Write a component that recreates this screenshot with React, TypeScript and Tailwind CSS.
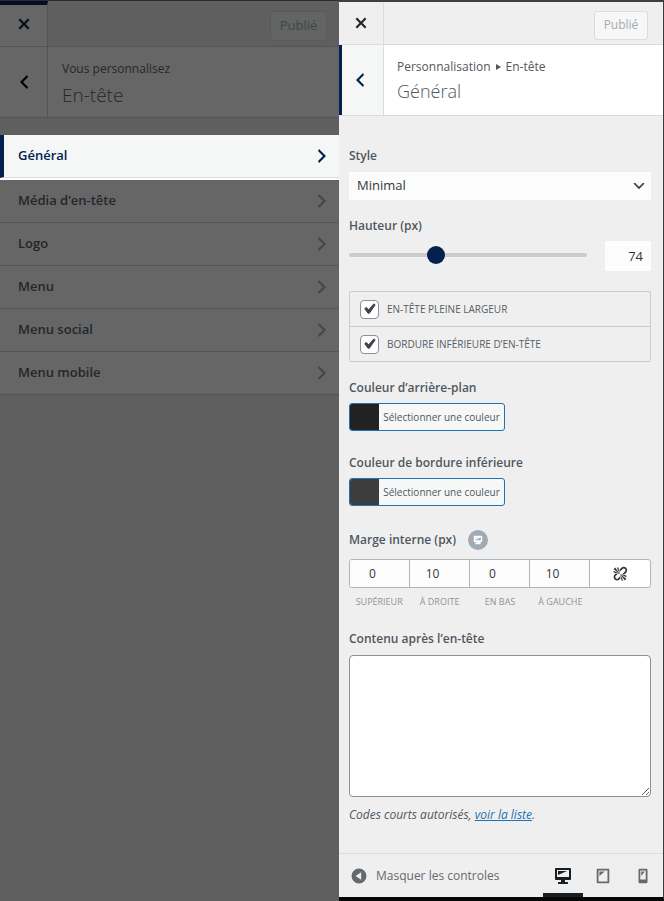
import { ReactNode, useState } from "react";

const ICONS = {
  close:
    "M14.95 6.46L11.41 10l3.54 3.54-1.41 1.41L10 11.42l-3.53 3.53-1.42-1.42L8.58 10 5.05 6.47l1.42-1.42L10 8.58l3.54-3.53z",
  left: "M14 5l-5 5 5 5-1 2-7-7 7-7z",
  right: "M6 15l5-5-5-5 1-2 7 7-7 7z",
  down: "M5 6l5 5 5-5 2 1-7 7-7-7z",
  check:
    "M14.83 4.89l1.34.94-5.81 8.38H9.02L5.78 9.67l1.34-1.25 2.57 2.4z",
  desktop:
    "M3 2h14c.55 0 1 .45 1 1v10c0 .55-.45 1-1 1h-5v2h2c.55 0 1 .45 1 1v1H5v-1c0-.55.45-1 1-1h2v-2H3c-.55 0-1-.45-1-1V3c0-.55.45-1 1-1zm13 9V4H4v7h12zM5 5h9L5 9V5z",
  tablet:
    "M4 2h12c.55 0 1 .45 1 1v14c0 .55-.45 1-1 1H4c-.55 0-1-.45-1-1V3c0-.55.45-1 1-1zm11 14V4H5v12h10zM6 5l6 0-6 5V5z",
  phone:
    "M6 2h8c.55 0 1 .45 1 1v14c0 .55-.45 1-1 1H6c-.55 0-1-.45-1-1V3c0-.55.45-1 1-1zm7 12V4H7v10h6zM8 5h4l-4 5V5z",
  collapse:
    "M10 1.7a8.3 8.3 0 1 0 0 16.6 8.3 8.3 0 0 0 0-16.6zM12.4 5.8v8.4L6.2 10z",
  unlink:
    "M17.74 2.26c1.68 1.69 1.68 4.41 0 6.1l-1.53 1.52c-.32.33-.69.58-1.08.77L13 10l1.69-1.64.76-.77.76-.76c.84-.84.84-2.2 0-3.04-.84-.85-2.2-.85-3.04 0l-.77.76-.76.76L10 7l-.65-2.14c.19-.38.44-.75.77-1.07l1.52-1.53c1.69-1.68 4.42-1.68 6.1 0zM2 4l8 6-6-8zm4-2l4 8-2-8H6zM2 6l8 4-8-2V6zm7.36 7.69L10 13l.74 2.35-1.38 1.39c-1.69 1.68-4.41 1.68-6.1 0-1.68-1.68-1.68-4.41 0-6.09l1.39-1.38L7 10l-.69.64-1.52 1.53c-.85.84-.85 2.2 0 3.04.84.85 2.2.85 3.04 0zM18 16l-8-6 6 8zm-4 2l-4-8 2 8h2zm4-4l-8-4 8 2v2z",
};

function Icon({
  name,
  className,
  rule = "evenodd",
}: {
  name: keyof typeof ICONS;
  className: string;
  rule?: "evenodd" | "nonzero";
}) {
  return (
    <svg viewBox="0 0 20 20" className={className} fill="currentColor" fillRule={rule} aria-hidden="true">
      <path d={ICONS[name]} />
    </svg>
  );
}

function SectionsPanel() {
  const items = ["Média d’en-tête", "Logo", "Menu", "Menu social", "Menu mobile"];
  return (
    <aside className="border-t border-[#2b2b2b] bg-[#5f5f5f]">
      <div className="flex h-[46px] border-b border-[#545454]">
        <button
          type="button"
          aria-label="Fermer"
          className="flex w-12 items-center justify-center border-t-4 border-r border-t-[#000e28] border-r-[#545454] bg-[#666666] pb-1 text-[#060d18]"
        >
          <Icon name="close" className="size-[22px]" />
        </button>
        <div className="flex flex-1 items-center justify-end pt-1 pr-3">
          <button
            type="button"
            disabled
            className="h-[30px] w-[57px] rounded-[3px] border border-[#595b5b] bg-[#636464] text-[13px] text-[#424445]"
          >
            Publié
          </button>
        </div>
      </div>
      <div className="flex h-[71px] border-b border-[#545454] bg-[#666666]">
        <button
          type="button"
          aria-label="Retour"
          className="flex w-12 items-center justify-center border-r border-[#545454] text-black"
        >
          <Icon name="left" className="size-5" />
        </button>
        <div className="pt-3 pl-3.5 text-[#25282b]">
          <p className="text-[12px] leading-5">Vous personnalisez</p>
          <h1 className="text-[19px] leading-8 font-light">En-tête</h1>
        </div>
      </div>
      <ul className="pt-[17px]">
        <li className="border-b-2 border-white">
          <button
            type="button"
            className="flex h-[43px] w-full items-center justify-between border-b border-l-4 border-b-[#dcdcde] border-l-[#04204f] bg-[#f5f7f7] pr-[7px] pl-3.5 text-[13px] font-semibold text-[#04204f]"
          >
            Général
            <Icon name="right" className="size-5" />
          </button>
        </li>
        {items.map((item) => (
          <li key={item}>
            <button
              type="button"
              className="flex h-[43px] w-full items-center justify-between border-b border-[#555555] bg-[#666666] pr-[7px] pl-[18px] text-[13px] font-semibold text-[#23272b]"
            >
              {item}
              <Icon name="right" className="size-5 text-[#444648]" />
            </button>
          </li>
        ))}
      </ul>
    </aside>
  );
}

function FieldLabel({ htmlFor, children }: { htmlFor: string; children: ReactNode }) {
  return (
    <label htmlFor={htmlFor} className="block text-[12px] leading-5 font-semibold text-[#50575e]">
      {children}
    </label>
  );
}

function CheckRow({ id, label }: { id: string; label: string }) {
  return (
    <label htmlFor={id} className="flex h-[35px] items-center gap-2 border-b border-[#cccccc] px-[9px] text-[10px] text-[#555d66] uppercase">
      <span className="grid size-5 place-items-center">
        <input
          id={id}
          type="checkbox"
          defaultChecked
          className="peer col-start-1 row-start-1 size-[19px] appearance-none rounded-[4px] border border-[#8c8f94] bg-white"
        />
        <Icon name="check" className="pointer-events-none invisible col-start-1 row-start-1 size-5 stroke-current text-[#3c434a] peer-checked:visible" />
      </span>
      {label}
    </label>
  );
}

function ColorButton({ id, swatch }: { id: string; swatch: string }) {
  return (
    <button
      id={id}
      type="button"
      className="mt-[5px] flex h-7 w-[156px] overflow-hidden rounded-[3px] border border-[#2271b1] bg-[#f6f7f7] text-[10px] whitespace-nowrap text-[#50575e]"
    >
      <span className={`w-[29px] self-stretch ${swatch}`} />
      <span className="flex-1 self-center text-center">Sélectionner une couleur</span>
    </button>
  );
}

function SettingsPanel() {
  const [height, setHeight] = useState(74);
  const margins = [
    { id: "top", label: "Supérieur", value: 0 },
    { id: "right", label: "À droite", value: 10 },
    { id: "bottom", label: "En bas", value: 0 },
    { id: "left", label: "À gauche", value: 10 },
  ];
  return (
    <main className="flex flex-col border-t-2 border-r border-b-4 border-t-[#3f3f3f] border-r-[#3b3b3b] border-b-[#060606] bg-[#efefef]">
      <div className="flex h-[43px] border-b border-[#dcdcde]">
        <button
          type="button"
          aria-label="Fermer"
          className="flex w-[45px] items-center justify-center border-r border-[#dcdcde] text-[#23282d]"
        >
          <Icon name="close" className="size-[22px]" />
        </button>
        <div className="flex flex-1 items-center justify-end pt-1 pr-[15px]">
          <button
            type="button"
            disabled
            className="h-[29px] w-[54px] rounded-[3px] border border-[#dcdcde] bg-[#f6f7f7] text-[12px] text-[#a7aaad]"
          >
            Publié
          </button>
        </div>
      </div>
      <div className="flex h-[71px] border-b border-[#dcdcde] bg-white">
        <button
          type="button"
          aria-label="Retour"
          className="flex w-[45px] items-center justify-center border-r border-l-3 border-r-[#dcdcde] border-l-[#04204f] bg-[#f5f7f7] pr-1.5 text-[#04204f]"
        >
          <Icon name="left" className="size-5" />
        </button>
        <div className="pt-3 pl-[13px] text-[#50575e]">
          <p className="flex items-center gap-[5px] text-[12px] leading-5">
            Personnalisation
            <svg viewBox="0 0 5 6" className="h-1.5 w-[5px]" fill="currentColor" aria-hidden="true">
              <path d="M0 0l5 3-5 3z" />
            </svg>
            En-tête
          </p>
          <h2 className="text-[18px] leading-7 font-light">Général</h2>
        </div>
      </div>

      <form className="pt-[30px] pr-3 pb-7 pl-2.5">
        <FieldLabel htmlFor="style">Style</FieldLabel>
        <div className="mt-1.5 grid items-center">
          <select
            id="style"
            className="col-start-1 row-start-1 h-7 w-full appearance-none bg-[#fcfcfd] px-2 text-[13px] text-[#32373c]"
          >
            <option>Minimal</option>
          </select>
          <Icon name="down" className="pointer-events-none col-start-1 row-start-1 mr-1 size-4 justify-self-end text-[#3c434a]" />
        </div>

        <div className="mt-4">
          <FieldLabel htmlFor="height">Hauteur (px)</FieldLabel>
        </div>
        <div className="mt-[5px] flex items-start gap-[18px]">
          <input
            id="height"
            type="range"
            min={0}
            max={210}
            value={height}
            onChange={(e) => setHeight(Number(e.target.value))}
            className="mt-[5px] h-[18px] min-w-0 flex-1 appearance-none bg-transparent [&::-webkit-slider-runnable-track]:h-1 [&::-webkit-slider-runnable-track]:rounded-full [&::-webkit-slider-runnable-track]:bg-[#cccccc] [&::-webkit-slider-thumb]:-mt-[7px] [&::-webkit-slider-thumb]:size-[18px] [&::-webkit-slider-thumb]:appearance-none [&::-webkit-slider-thumb]:rounded-full [&::-webkit-slider-thumb]:bg-[#04204f]"
          />
          <input
            type="text"
            aria-label="Hauteur en pixels"
            value={height}
            onChange={(e) => setHeight(Number(e.target.value) || 0)}
            className="h-[30px] w-[46px] bg-[#fcfcfd] pr-2 text-right text-[13px] text-[#32373c]"
          />
        </div>

        <div className="mt-5 rounded-[2px] border border-b-0 border-[#cccccc]">
          <CheckRow id="full" label="En-tête pleine largeur" />
          <CheckRow id="border" label="Bordure inférieure d’en-tête" />
        </div>

        <div className="mt-4">
          <FieldLabel htmlFor="background">Couleur d’arrière-plan</FieldLabel>
          <ColorButton id="background" swatch="bg-[#222222]" />
        </div>
        <div className="mt-[22px]">
          <FieldLabel htmlFor="line">Couleur de bordure inférieure</FieldLabel>
          <ColorButton id="line" swatch="bg-[#3d3d3d]" />
        </div>

        <div className="mt-6 flex items-center gap-3">
          <FieldLabel htmlFor="top">Marge interne (px)</FieldLabel>
          <button
            type="button"
            aria-label="Ordinateur"
            className="flex size-5 items-center justify-center rounded-full bg-[#a0aab3] text-white"
          >
            <Icon name="desktop" rule="nonzero" className="size-2.5 stroke-current" />
          </button>
        </div>
        <div className="mt-[9px] grid grid-cols-5 overflow-hidden rounded-[3px] border border-[#adb5bd] bg-white">
          {margins.map((m) => (
            <input
              key={m.id}
              id={m.id}
              type="text"
              defaultValue={m.value}
              aria-label={m.label}
              className="h-[27px] min-w-0 border-r border-[#adb5bd] bg-[#fcfcfd] pr-3.5 text-center text-[12px] text-[#32373c]"
            />
          ))}
          <button type="button" aria-label="Lier les valeurs" className="flex items-center justify-center text-[#32373c]">
            <Icon name="unlink" rule="nonzero" className="size-4" />
          </button>
        </div>
        <div className="mt-1 grid grid-cols-5 text-center text-[9px] leading-5 text-[#8f9498] uppercase">
          {margins.map((m) => (
            <label key={m.id} htmlFor={m.id}>
              {m.label}
            </label>
          ))}
        </div>

        <div className="mt-[17px]">
          <FieldLabel htmlFor="content">Contenu après l’en-tête</FieldLabel>
        </div>
        <textarea
          id="content"
          className="mt-[6px] block h-[142px] w-full resize rounded-[4px] border border-[#8c8f94] bg-white p-2 text-[13px]"
        />
        <p className="mt-2 text-[12px] leading-5 text-[#50575e] italic">
          Codes courts autorisés,{" "}
          <a href="#liste" className="text-[#2271b1] underline">
            voir la liste
          </a>
          .
        </p>
      </form>

      <footer className="mt-auto flex h-11 border-t border-[#dcdcde] pl-[11px] text-[#656a6f]">
        <button type="button" className="flex items-center gap-2 text-[12px]">
          <Icon name="collapse" className="size-[18px]" />
          Masquer les controles
        </button>
        <div className="ml-auto flex">
          <button
            type="button"
            aria-label="Ordinateur"
            className="flex w-10 items-center justify-center border-b-4 border-[#191e23] pt-1 text-[#191e23]"
          >
            <Icon name="desktop" className="size-5" />
          </button>
          <button type="button" aria-label="Tablette" className="flex w-10 items-center justify-center">
            <Icon name="tablet" className="size-[18px]" />
          </button>
          <button type="button" aria-label="Mobile" className="flex w-10 items-center justify-center">
            <Icon name="phone" className="size-[18px]" />
          </button>
        </div>
      </footer>
    </main>
  );
}

export default function App() {
  return (
    <div className="grid min-h-screen grid-cols-[339fr_325fr] font-['Open_Sans','Noto_Sans',sans-serif]">
      <SectionsPanel />
      <SettingsPanel />
    </div>
  );
}
